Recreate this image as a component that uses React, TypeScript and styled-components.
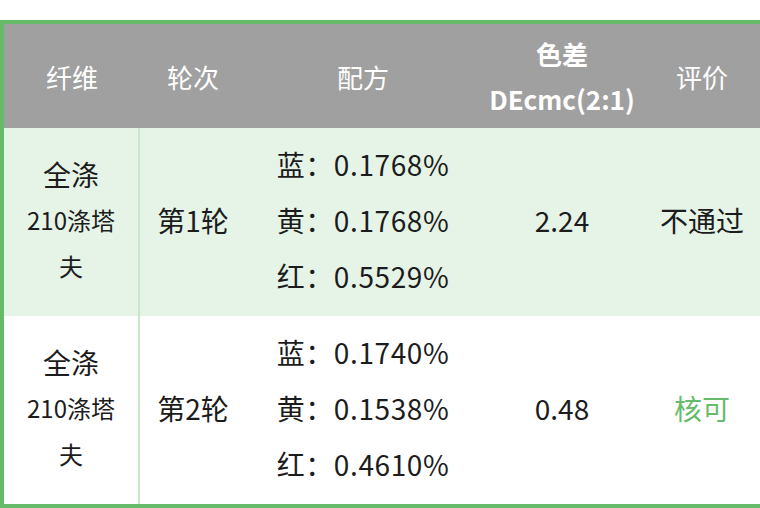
import { createGlobalStyle } from 'styled-components';
import styled from 'styled-components';

const GlobalStyle = createGlobalStyle`
  body {
    margin: 0;
    background: #ffffff;
    font-family: "Noto Sans CJK SC", "Noto Sans", sans-serif;
    overflow: hidden;
  }
`;

const Page = styled.div`
  padding-top: 20px;
`;

const Table = styled.table`
  width: 760px;
  table-layout: fixed;
  border-collapse: separate;
  border-spacing: 0;
  border: 4px solid #66bb6a;
  border-right: none;
  color: #1c1c1c;
`;

const HeadCell = styled.th<{ $bold?: boolean }>`
  height: 104px;
  padding: 0;
  background: #a0a0a0;
  color: #ffffff;
  font-size: 26px;
  font-weight: ${(p) => (p.$bold ? 700 : 400)};
  line-height: 45px;
  text-align: center;
  vertical-align: middle;
`;

const Row = styled.tr<{ $tinted?: boolean }>`
  background: ${(p) => (p.$tinted ? '#e6f4e8' : '#ffffff')};
`;

const Cell = styled.td<{ $divider?: boolean; $tone?: string }>`
  height: 184px;
  padding: 0 0 4px;
  font-size: 28px;
  text-align: center;
  vertical-align: middle;
  color: ${(p) => p.$tone || '#1c1c1c'};
  border-right: ${(p) => (p.$divider ? '2px solid #c9e6cc' : 'none')};
`;

const FiberName = styled.div`
  line-height: 46px;
  font-size: 28px;
`;

const FiberSpec = styled.div`
  line-height: 46px;
  font-size: 24px;
  padding: 0 12px;
`;

const Formula = styled.div`
  line-height: 56px;
  font-size: 28px;
  letter-spacing: 0.6px;
`;

interface RecordRow {
  round: string;
  formula: [string, string][];
  delta: string;
  verdict: string;
  passed: boolean;
}

const rows: RecordRow[] = [
  {
    round: '第1轮',
    formula: [
      ['蓝', '0.1768%'],
      ['黄', '0.1768%'],
      ['红', '0.5529%'],
    ],
    delta: '2.24',
    verdict: '不通过',
    passed: false,
  },
  {
    round: '第2轮',
    formula: [
      ['蓝', '0.1740%'],
      ['黄', '0.1538%'],
      ['红', '0.4610%'],
    ],
    delta: '0.48',
    verdict: '核可',
    passed: true,
  },
];

export default function App() {
  return (
    <Page>
      <GlobalStyle />
      <Table>
        <colgroup>
          <col style={{ width: 136 }} />
          <col style={{ width: 106 }} />
          <col style={{ width: 234 }} />
          <col style={{ width: 164 }} />
          <col style={{ width: 116 }} />
        </colgroup>
        <thead>
          <tr>
            <HeadCell>纤维</HeadCell>
            <HeadCell>轮次</HeadCell>
            <HeadCell>配方</HeadCell>
            <HeadCell $bold>
              色差
              <br />
              DEcmc(2:1)
            </HeadCell>
            <HeadCell>评价</HeadCell>
          </tr>
        </thead>
        <tbody>
          {rows.map((r, i) => (
            <Row key={r.round} $tinted={i === 0}>
              <Cell $divider>
                <FiberName>全涤</FiberName>
                <FiberSpec>210涤塔夫</FiberSpec>
              </Cell>
              <Cell>{r.round}</Cell>
              <Cell>
                {r.formula.map(([k, v]) => (
                  <Formula key={k}>
                    {k}：{v}
                  </Formula>
                ))}
              </Cell>
              <Cell>{r.delta}</Cell>
              <Cell $tone={r.passed ? '#66bb6a' : undefined}>{r.verdict}</Cell>
            </Row>
          ))}
        </tbody>
      </Table>
    </Page>
  );
}
